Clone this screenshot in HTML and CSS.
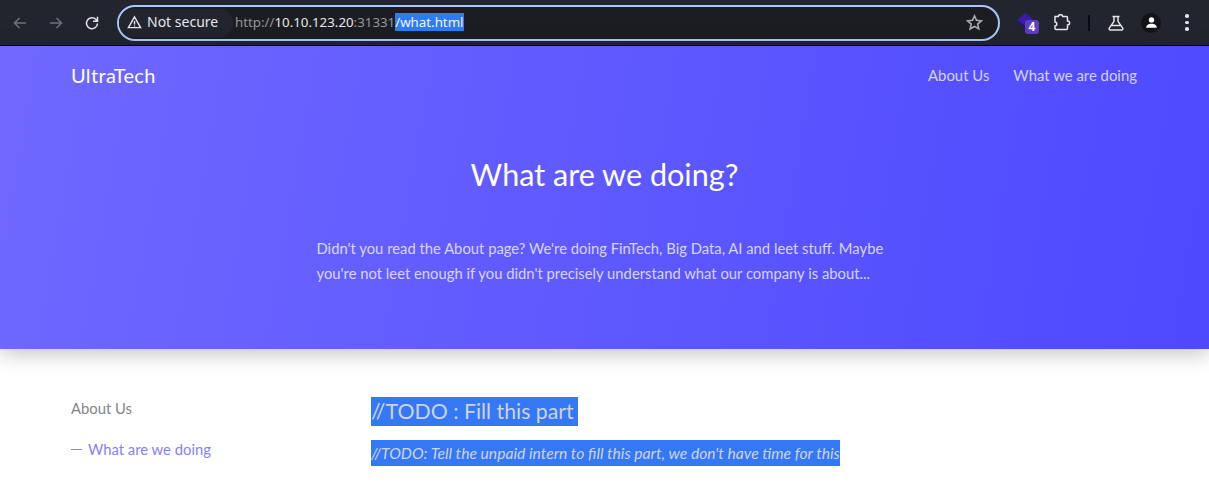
FILE: index.html
```html
<!DOCTYPE html>
<html lang="en">
<head>
  <meta charset="UTF-8" />
  <meta name="viewport" content="width=device-width, initial-scale=1" />
  <title>UltraTech - What are we doing?</title>
  <link rel="stylesheet" href="styles.css">
</head>
<body>

  <div class="toolbar">
    <div class="nav-buttons">
      <svg class="tool-icon" viewBox="0 0 16 16"><path d="M14 8H3M7.500 3 2.500 8l5 5" class="dim"/></svg>
      <svg class="tool-icon" viewBox="0 0 16 16"><path d="M2 8h11M8.500 3l5 5-5 5" class="dim"/></svg>
      <svg class="tool-icon" viewBox="0 0 16 16"><path d="M13.500 8.500a5.500 5.500 0 1 1-1.700-4.300L13.500 6M13.500 1.800V6.200H9" class="bright"/></svg>
    </div>
    <div class="omnibox">
      <div class="chip">
        <svg class="warn-icon" viewBox="0 0 16 16"><path d="M8 2 1.500 13.500h13zM8 6.500v3.600M8 11.300v1" class="bright"/></svg>
        <span>Not secure</span>
      </div>
      <div class="url"><span class="url-dim">http://</span>10.10.123.20<span class="url-dim">:31331</span><span class="url-selected">/what.html</span></div>
      <svg class="star-icon" viewBox="0 0 16 16"><path d="M8 1.800 9.900 6l4.500.5-3.400 3 1 4.500L8 11.700 3.900 14l1-4.500-3.400-3L6.100 6z" class="star"/></svg>
    </div>
    <div class="extensions">
      <div class="ext-badge-wrap">
        <svg class="ext-shape" viewBox="0 0 16 15"><path d="M0 7 8 0l8 6-8 7z" fill="#3a1aa6"/><path d="M0 7l8 6 8-7v2l-8 7-8-6z" fill="#27117a"/></svg>
        <span class="ext-badge">4</span>
      </div>
      <svg class="puzzle-icon" viewBox="0 0 18 18"><path d="M2 2.500h3.300c.2-2.500 4.200-2.500 4.400 0h3.800a1 1 0 0 1 1 1V7c2.800 0 2.800 4 0 4v3.500a1 1 0 0 1-1 1H3a1 1 0 0 1-1-1V12c2.500-.3 2.500-3.700 0-4z" class="bright"/></svg>
      <div class="divider"></div>
      <svg class="flask-icon" viewBox="0 0 16 16"><path d="M4.500 1.500h7M6 1.500v4.800L1.300 13.200c-.5.800 0 1.800 1 1.800h11.400c1 0 1.500-1 1-1.800L10 6.300V1.500M4 10.500h8" class="bright"/></svg>
      <div class="avatar">
        <svg viewBox="0 0 16 16"><circle cx="8" cy="4.800" r="3.300" fill="#fff"/><path d="M1.500 14.500c0-3.500 3-5 6.500-5s6.500 1.500 6.500 5z" fill="#fff"/></svg>
      </div>
      <div class="menu-dots"><i></i><i></i><i></i></div>
    </div>
  </div>

  <header class="hero">
    <nav class="topnav">
      <a class="brand" href="#">UltraTech</a>
      <div class="topnav-links">
        <a href="#">About Us</a>
        <a href="#">What we are doing</a>
      </div>
    </nav>
    <div class="hero-body">
      <h1>What are we doing?</h1>
      <p>Didn't you read the About page? We're doing FinTech, Big Data, AI and leet stuff. Maybe you're not leet enough if you didn't precisely understand what our company is about...</p>
    </div>
  </header>

  <main class="content">
    <aside class="sidenav">
      <a href="#">About Us</a>
      <a href="#" class="active"><span class="dash"></span>What are we doing</a>
    </aside>
    <section class="article">
      <h2><span class="selected selected-title">//TODO : Fill this part</span></h2>
      <p><span class="selected">//TODO: Tell the unpaid intern to fill this part, we don't have time for this</span></p>
    </section>
  </main>

</body>
</html>
```

FILE: styles.css
```css
html, body {
  margin: 0;
  height: 493px;
  overflow: hidden;
}
body {
  font-family: Lato, sans-serif;
  background: white;
  color: #777;
}
a {
  text-decoration: none;
}

/* browser chrome */
.toolbar {
  display: flex;
  align-items: center;
  height: 45px;
  background: #23252e;
  border-bottom: 1px solid #08090c;
  font-family: "Noto Sans", sans-serif;
}
.nav-buttons {
  display: flex;
  gap: 20px;
  margin-left: 12px;
  width: 105px;
  flex-shrink: 0;
}
.tool-icon {
  width: 16px;
  height: 16px;
}
.dim, .bright, .star {
  fill: none;
  stroke-width: 1.5;
}
.dim {
  stroke: #6f7278;
}
.bright {
  stroke: #e3e5e8;
}
.star {
  stroke: #a9abb0;
}
.omnibox {
  display: flex;
  align-items: center;
  box-sizing: border-box;
  width: 883px;
  height: 36px;
  background: #1c1d22;
  border: 2px solid #a8c7fa;
  border-radius: 18px;
  color: #e3e5e8;
  font-size: 14px;
}
.chip {
  display: flex;
  align-items: center;
  gap: 5px;
  width: 114px;
  height: 28px;
  padding-left: 8px;
  box-sizing: border-box;
  background: #23252e;
  border-radius: 14px;
  flex-shrink: 0;
}
.chip span {
  padding-bottom: 2px;
}
.warn-icon {
  width: 15px;
  height: 15px;
}
.url {
  flex: 1;
  margin-left: 2px;
  padding-bottom: 2px;
  font-size: 13.3px;
}
.url-dim {
  color: #94969b;
}
.url-selected {
  background: #2f7bf0;
  color: #f0f4fa;
}
.star-icon {
  width: 17px;
  height: 17px;
  margin-right: 15px;
}
.extensions {
  display: flex;
  align-items: center;
  flex: 1;
  margin-left: 17px;
}
.ext-badge-wrap {
  position: relative;
  width: 22px;
  height: 24px;
}
.ext-shape {
  width: 16px;
  height: 15px;
}
.ext-badge {
  position: absolute;
  left: 8px;
  top: 9px;
  width: 14px;
  height: 14px;
  background: #5f3dc4;
  border-radius: 3px;
  color: white;
  font-size: 12px;
  font-weight: 700;
  line-height: 14px;
  text-align: center;
}
.puzzle-icon {
  width: 18px;
  height: 18px;
  margin-left: 14px;
}
.divider {
  width: 2px;
  height: 16px;
  background: #0b0c10;
  margin-left: 17px;
}
.flask-icon {
  width: 16px;
  height: 16px;
  margin-left: 18px;
}
.avatar {
  display: flex;
  align-items: center;
  justify-content: center;
  width: 20px;
  height: 20px;
  border-radius: 50%;
  background: #121317;
  margin-left: 17px;
}
.avatar svg {
  width: 13px;
  height: 13px;
}
.menu-dots {
  display: flex;
  flex-direction: column;
  gap: 3px;
  margin-left: 24px;
}
.menu-dots i {
  width: 3.500px;
  height: 3.500px;
  border-radius: 50%;
  background: #e3e5e8;
}

/* hero */
.hero {
  position: relative;
  height: 303px;
  background: linear-gradient(100deg, #7068ff 0%, #4d49ff 100%);
  box-shadow: 0 4px 20px rgba(0, 0, 0, 0.25);
  color: white;
}
.topnav {
  display: flex;
  justify-content: space-between;
  align-items: center;
  padding: 16px 72px 0 71px;
}
.brand {
  color: white;
  font-size: 20px;
  line-height: 26px;
  letter-spacing: 0.35px;
}
.topnav-links {
  display: flex;
  gap: 24px;
}
.topnav-links a {
  color: rgba(255, 255, 255, 0.75);
  font-size: 14.900px;
}
.hero-body {
  width: 576px;
  margin: 0 auto;
  padding-top: 68px;
}
.hero-body h1 {
  margin: 0 0 42px;
  font-size: 30.600px;
  font-weight: 400;
  line-height: 38px;
  text-align: center;
}
.hero-body p {
  margin: 0;
  color: rgba(255, 255, 255, 0.75);
  font-size: 14.800px;
  line-height: 25px;
}

/* page content */
.content {
  display: flex;
  padding: 48px 0 0 71px;
}
.sidenav {
  display: flex;
  flex-direction: column;
  gap: 22px;
  width: 300px;
  padding-top: 2px;
  font-size: 14.800px;
  line-height: 19px;
}
.sidenav a {
  color: #868686;
}
.sidenav a.active {
  display: flex;
  align-items: center;
  color: #8580ff;
}
.dash {
  width: 11px;
  height: 1px;
  background: #8580ff;
  margin-right: 6px;
}
.article h2 {
  margin: 0 0 14px;
  font-size: 21.300px;
  font-weight: 400;
  line-height: 29px;
}
.article p {
  margin: 0;
  font-size: 15.670px;
  font-style: italic;
  line-height: 26px;
}
.selected {
  display: inline-block;
  background: #3478f6;
  color: #cdd3de;
}
.selected-title {
  padding-right: 4px;
}
```
